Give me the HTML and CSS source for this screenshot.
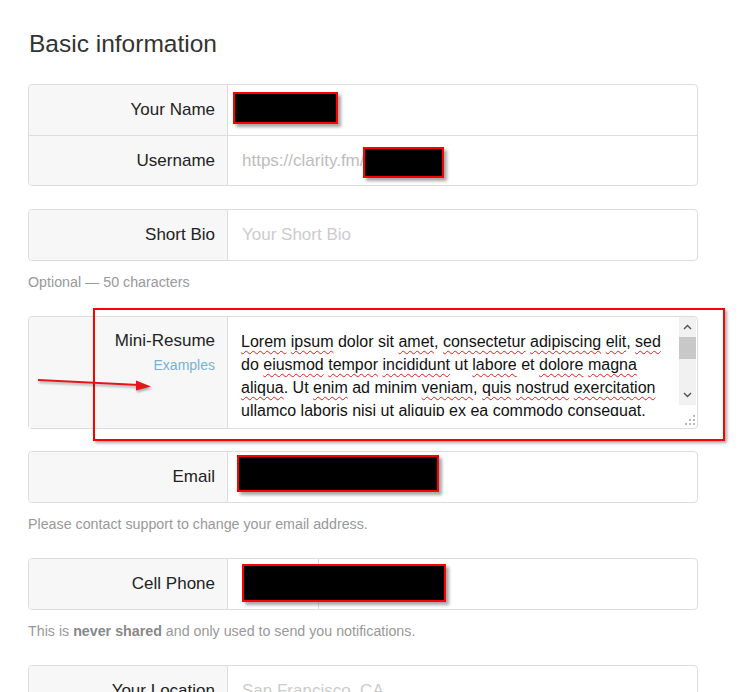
FILE: index.html
```html
<!DOCTYPE html>
<html lang="en">
<head>
  <meta charset="UTF-8" />
  <title>Basic information</title>
  <meta name="viewport" content="width=device-width, initial-scale=1.0" />
  <link rel="stylesheet" href="styles.css">
</head>
<body>
  <div class="page">
    <h1 class="title">Basic information</h1>

    <div class="group">
      <div class="row">
        <div class="label">Your Name</div>
        <div class="field"><span class="redact redact-name"></span></div>
      </div>
      <div class="row">
        <div class="label">Username</div>
        <div class="field"><span class="prefix-text">https://clarity.fm/</span><span class="redact redact-user"></span></div>
      </div>
    </div>

    <div class="group">
      <div class="row">
        <div class="label">Short Bio</div>
        <div class="field placeholder">Your Short Bio</div>
      </div>
    </div>
    <p class="help">Optional — 50 characters</p>

    <div class="group resume">
      <div class="row row-tall">
        <div class="label label-top">
          <div>Mini-Resume</div>
          <a class="examples">Examples</a>
        </div>
        <div class="field textarea">
          <div class="textarea-text">
            <span class="sp">Lorem</span> <span class="sp">ipsum</span> dolor sit <span class="sp">amet</span>, <span class="sp">consectetur</span> <span class="sp">adipiscing</span> <span class="sp">elit</span>, <span class="sp">sed</span>
            do <span class="sp">eiusmod</span> <span class="sp">tempor</span> <span class="sp">incididunt</span> ut <span class="sp">labore</span> et <span class="sp">dolore</span> <span class="sp">magna</span>
            <span class="sp">aliqua</span>. Ut <span class="sp">enim</span> ad minim <span class="sp">veniam</span>, <span class="sp">quis</span> <span class="sp">nostrud</span> <span class="sp">exercitation</span>
            ullamco laboris nisi ut aliquip ex ea commodo consequat.
          </div>
          <div class="scrollbar">
            <div class="sb-btn">
              <svg width="9" height="6" viewBox="0 0 9 6"><path d="M1 5 L4.5 1.5 L8 5" fill="none" stroke="#505050" stroke-width="1.4"/></svg>
            </div>
            <div class="sb-track"><div class="sb-thumb"></div></div>
            <div class="sb-btn">
              <svg width="9" height="6" viewBox="0 0 9 6"><path d="M1 1 L4.5 4.5 L8 1" fill="none" stroke="#505050" stroke-width="1.4"/></svg>
            </div>
            <div class="sb-corner">
              <svg width="10" height="10" viewBox="0 0 10 10" fill="#b8b8b8">
                <rect x="8" y="0" width="2" height="2"/>
                <rect x="4" y="4" width="2" height="2"/>
                <rect x="8" y="4" width="2" height="2"/>
                <rect x="0" y="8" width="2" height="2"/>
                <rect x="4" y="8" width="2" height="2"/>
                <rect x="8" y="8" width="2" height="2"/>
              </svg>
            </div>
          </div>
        </div>
      </div>
      <div class="callout"></div>
      <svg class="arrow" width="124" height="24" viewBox="0 0 124 24">
        <line x1="1" y1="8" x2="102" y2="13" stroke="#e8141b" stroke-width="2" />
        <path d="M114 14.5 L99 8.5 L99 18.5 Z" fill="#e8141b" />
      </svg>
    </div>

    <div class="group group-email">
      <div class="row">
        <div class="label">Email</div>
        <div class="field"><span class="redact redact-email"></span></div>
      </div>
    </div>
    <p class="help">Please contact support to change your email address.</p>

    <div class="group">
      <div class="row">
        <div class="label">Cell Phone</div>
        <div class="field phone">
          <div class="country"></div>
          <div class="phone-input"></div>
          <span class="redact redact-phone"></span>
        </div>
      </div>
    </div>
    <p class="help">This is <strong>never shared</strong> and only used to send you notifications.</p>

    <div class="group">
      <div class="row">
        <div class="label">Your Location</div>
        <div class="field placeholder">San Francisco, CA</div>
      </div>
    </div>
  </div>
</body>
</html>
```

FILE: styles.css
```css
body {
  margin: 0;
  background: #fff;
  font-family: "Liberation Sans", Arial, sans-serif;
  color: #222;
}

.page {
  width: 670px;
  padding: 30px 0 40px 28px;
}

.title {
  margin: 0 0 26px 1px;
  font-size: 24.5px;
  line-height: 28px;
  font-weight: normal;
  color: #333;
}

.group {
  position: relative;
  border: 1px solid #ddd;
  border-radius: 4px;
  background: #fff;
}

.group + .group {
  margin-top: 23px;
}

.help + .group {
  margin-top: 24px;
}

.group-email {
  margin-top: 22px !important;
}

.row {
  display: flex;
  height: 50px;
}

.row + .row {
  height: 50px;
  border-top: 1px solid #ddd;
  box-sizing: border-box;
}

.row-tall {
  height: 111px;
}

.label {
  width: 186px;
  flex-shrink: 0;
  padding-right: 12px;
  background: #f7f7f7;
  border-right: 1px solid #ddd;
  display: flex;
  align-items: center;
  justify-content: flex-end;
  font-size: 17px;
  color: #222;
}

.row:first-child .label {
  border-top-left-radius: 4px;
}

.row:last-child .label {
  border-bottom-left-radius: 4px;
}

.label-top {
  flex-direction: column;
  align-items: flex-end;
  justify-content: flex-start;
  padding-top: 13px;
  box-sizing: border-box;
  width: 199px;
  line-height: 22px;
}

.examples {
  margin-top: 3px;
  font-size: 14px;
  line-height: 20px;
  color: #74b3d6;
}

.field {
  position: relative;
  flex: 1;
  display: flex;
  align-items: center;
  padding-left: 14px;
  font-size: 17px;
}

.placeholder {
  color: #ccc;
}

.prefix-text {
  color: #bdbdbd;
}

.redact {
  position: absolute;
  background: #000;
  border: 2px solid #f00;
  box-sizing: border-box;
  box-shadow: 3px 3px 3px rgba(0, 0, 0, 0.35);
}

.redact-name {
  left: 5px;
  top: 7px;
  width: 105px;
  height: 32px;
}

.redact-user {
  position: static;
  display: inline-block;
  width: 81px;
  height: 31px;
  margin-left: -2px;
  margin-top: 3px;
}

.redact-email {
  left: 9px;
  top: 3px;
  width: 202px;
  height: 37px;
}

.phone {
  padding-left: 0;
}

.country {
  width: 90px;
  height: 100%;
  border-right: 1px solid #ddd;
}

.redact-phone {
  left: 14px;
  top: 5px;
  width: 204px;
  height: 38px;
}

.textarea {
  align-items: stretch;
  padding-left: 13px;
  font-size: 16px;
}

.textarea-text {
  flex: 1;
  margin-top: 13px;
  height: 86px;
  overflow: hidden;
  line-height: 23px;
  color: #111;
  padding-right: 8px;
}

.sp {
  text-decoration: underline wavy #e41b1b;
  text-decoration-thickness: 1px;
  text-underline-offset: 3px;
}

.scrollbar {
  width: 17px;
  margin-right: 1px;
  display: flex;
  flex-direction: column;
}

.sb-btn {
  height: 20px;
  background: #f1f1f1;
  display: flex;
  align-items: center;
  justify-content: center;
}

.sb-track {
  flex: 1;
  background: #f1f1f1;
}

.sb-thumb {
  height: 22px;
  background: #c8c8c8;
}

.sb-corner {
  height: 20px;
  display: flex;
  align-items: flex-end;
  justify-content: flex-end;
  padding: 0 1px 3px 0;
}

.help {
  margin: 11px 0 0;
  font-size: 14.25px;
  line-height: 20px;
  color: #999;
}

.help strong {
  color: #888;
}

.callout {
  position: absolute;
  left: 64px;
  top: -9px;
  width: 632px;
  height: 133px;
  border: 2px solid #f00;
  box-sizing: border-box;
  box-shadow: 2px 2px 3px rgba(0, 0, 0, 0.35);
  pointer-events: none;
}

.arrow {
  position: absolute;
  left: 8px;
  top: 55px;
  filter: drop-shadow(1px 2px 1px rgba(0, 0, 0, 0.3));
}
```
